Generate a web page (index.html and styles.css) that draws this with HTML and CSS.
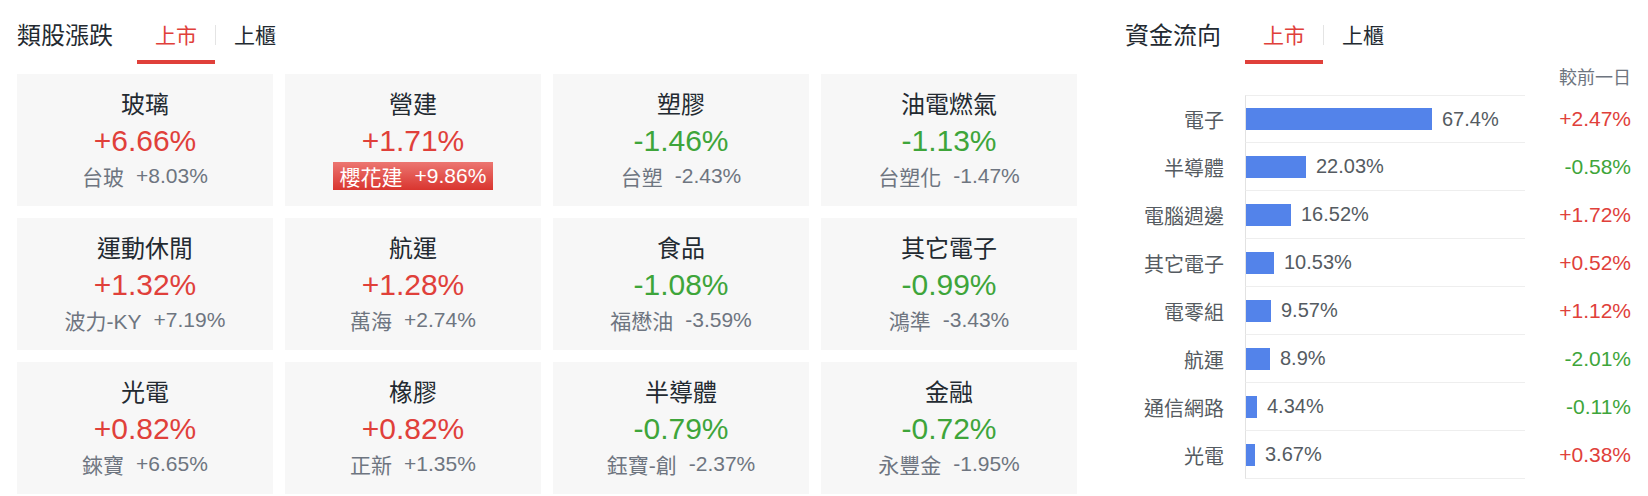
FILE: index.html
```html
<!DOCTYPE html>
<html lang="zh-Hant">
<head>
    <meta charset="UTF-8">
    <meta name="viewport" content="width=device-width, initial-scale=1.0">
    <title>類股漲跌</title>
    <link rel="stylesheet" href="styles.css">
</head>
<body>
<div class="page">
    <div class="sector">
        <div class="head">
            <h2 class="title">類股漲跌</h2>
            <ul class="tabs">
                <li class="on">上市</li>
                <li class="sep"></li>
                <li>上櫃</li>
            </ul>
        </div>
        <ul class="cards">
            <li class="card">
                <p class="name">玻璃</p>
                <p class="pct up">+6.66%</p>
                <p class="lead"><span>台玻</span><span>+8.03%</span></p>
            </li>
            <li class="card">
                <p class="name">營建</p>
                <p class="pct up">+1.71%</p>
                <p class="lead"><span class="badge"><span>櫻花建</span><span>+9.86%</span></span></p>
            </li>
            <li class="card">
                <p class="name">塑膠</p>
                <p class="pct down">-1.46%</p>
                <p class="lead"><span>台塑</span><span>-2.43%</span></p>
            </li>
            <li class="card">
                <p class="name">油電燃氣</p>
                <p class="pct down">-1.13%</p>
                <p class="lead"><span>台塑化</span><span>-1.47%</span></p>
            </li>
            <li class="card">
                <p class="name">運動休閒</p>
                <p class="pct up">+1.32%</p>
                <p class="lead"><span>波力-KY</span><span>+7.19%</span></p>
            </li>
            <li class="card">
                <p class="name">航運</p>
                <p class="pct up">+1.28%</p>
                <p class="lead"><span>萬海</span><span>+2.74%</span></p>
            </li>
            <li class="card">
                <p class="name">食品</p>
                <p class="pct down">-1.08%</p>
                <p class="lead"><span>福懋油</span><span>-3.59%</span></p>
            </li>
            <li class="card">
                <p class="name">其它電子</p>
                <p class="pct down">-0.99%</p>
                <p class="lead"><span>鴻準</span><span>-3.43%</span></p>
            </li>
            <li class="card">
                <p class="name">光電</p>
                <p class="pct up">+0.82%</p>
                <p class="lead"><span>錸寶</span><span>+6.65%</span></p>
            </li>
            <li class="card">
                <p class="name">橡膠</p>
                <p class="pct up">+0.82%</p>
                <p class="lead"><span>正新</span><span>+1.35%</span></p>
            </li>
            <li class="card">
                <p class="name">半導體</p>
                <p class="pct down">-0.79%</p>
                <p class="lead"><span>鈺寶-創</span><span>-2.37%</span></p>
            </li>
            <li class="card">
                <p class="name">金融</p>
                <p class="pct down">-0.72%</p>
                <p class="lead"><span>永豐金</span><span>-1.95%</span></p>
            </li>
        </ul>
    </div>

    <div class="flow">
        <div class="head">
            <h2 class="title">資金流向</h2>
            <ul class="tabs">
                <li class="on">上市</li>
                <li class="sep"></li>
                <li>上櫃</li>
            </ul>
        </div>
        <p class="flow-note">較前一日</p>
        <ul class="flow-list">
            <li><span class="label">電子</span><span class="bar-cell"><i class="bar" style="width:186px"></i><em>67.4%</em></span><span class="chg up">+2.47%</span></li>
            <li><span class="label">半導體</span><span class="bar-cell"><i class="bar" style="width:60px"></i><em>22.03%</em></span><span class="chg down">-0.58%</span></li>
            <li><span class="label">電腦週邊</span><span class="bar-cell"><i class="bar" style="width:45px"></i><em>16.52%</em></span><span class="chg up">+1.72%</span></li>
            <li><span class="label">其它電子</span><span class="bar-cell"><i class="bar" style="width:28px"></i><em>10.53%</em></span><span class="chg up">+0.52%</span></li>
            <li><span class="label">電零組</span><span class="bar-cell"><i class="bar" style="width:25px"></i><em>9.57%</em></span><span class="chg up">+1.12%</span></li>
            <li><span class="label">航運</span><span class="bar-cell"><i class="bar" style="width:24px"></i><em>8.9%</em></span><span class="chg down">-2.01%</span></li>
            <li><span class="label">通信網路</span><span class="bar-cell"><i class="bar" style="width:11px"></i><em>4.34%</em></span><span class="chg down">-0.11%</span></li>
            <li><span class="label">光電</span><span class="bar-cell"><i class="bar" style="width:9px"></i><em>3.67%</em></span><span class="chg up">+0.38%</span></li>
        </ul>
    </div>
</div>
</body>
</html>
```

FILE: styles.css
```css
*{ margin: 0; padding: 0; box-sizing: border-box; }
ul,ol{ list-style: none; }
i,em{ font-style: normal; }
body{
    background: #fff;
    color: #232a31;
    font-family: "Liberation Sans", "Noto Sans CJK TC", sans-serif;
}
.up{ color: #e0403a; }
.down{ color: #3ea53a; }

.page{
    display: flex;
    gap: 48px;
    width: 1648px;
    padding: 0 17px;
}
.sector{ width: 1060px; }
.flow{ width: 506px; }

/* 標題 + 頁籤 */
.head{
    display: flex;
    align-items: flex-end;
    height: 64px;
}
.head .title{
    margin: 0 24px 14px 0;
    font-size: 24px;
    font-weight: normal;
    line-height: 28px;
}
.tabs{
    display: flex;
    align-items: flex-end;
}
.tabs li{
    padding: 0 18px 10px;
    border-bottom: 4px solid transparent;
    font-size: 21px;
    line-height: 28px;
    cursor: pointer;
}
.tabs li.on{
    color: #e0403a;
    border-bottom-color: #e0403a;
}
.tabs li.sep{
    width: 1px;
    height: 20px;
    margin-bottom: 19px;
    padding: 0;
    border: 0;
    background: #e4e4e4;
}

/* 類股卡片 */
.cards{
    display: grid;
    grid-template-columns: repeat(4, 256px);
    grid-auto-rows: 132px;
    gap: 12px;
    margin-top: 10px;
}
.card{
    display: flex;
    flex-direction: column;
    align-items: center;
    justify-content: center;
    background: #f7f7f7;
    text-align: center;
}
.card .name{
    font-size: 24px;
    line-height: 32px;
}
.card .pct{
    font-size: 30px;
    line-height: 40px;
}
.card .lead{
    display: flex;
    align-items: center;
    height: 30px;
    color: #6e7580;
    font-size: 21px;
}
.card .lead span + span{ margin-left: 12px; }
.card .lead .badge{
    display: flex;
    align-items: center;
    height: 28px;
    padding: 0 7px;
    color: #fff;
    background: linear-gradient(#ec7671, #d9352f);
}

/* 資金流向 */
.flow-note{
    height: 31px;
    padding-top: 1px;
    color: #6e7580;
    font-size: 18px;
    line-height: 26px;
    text-align: right;
}
.flow-list li{
    display: flex;
    height: 48px;
}
.flow-list .label{
    display: flex;
    align-items: center;
    justify-content: flex-end;
    width: 120px;
    padding-right: 21px;
    color: #555b61;
    font-size: 20px;
}
.flow-list .bar-cell{
    display: flex;
    align-items: center;
    width: 280px;
    border-left: 1px solid #e2e2e2;
    border-bottom: 1px solid #eeeeee;
}
.flow-list li:first-child .bar-cell{ border-top: 1px solid #eeeeee; }
.flow-list .bar{
    display: block;
    height: 22px;
    background: #5383ea;
}
.flow-list em{
    margin-left: 10px;
    color: #555b61;
    font-size: 20px;
}
.flow-list .chg{
    display: flex;
    flex: 1;
    align-items: center;
    justify-content: flex-end;
    font-size: 21px;
}
```
